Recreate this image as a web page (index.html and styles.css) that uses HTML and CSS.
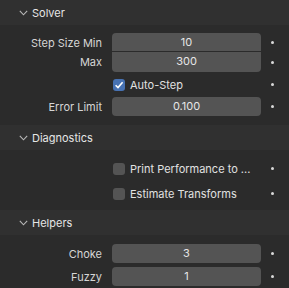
FILE: index.html
```html
<!DOCTYPE html>
<html lang="en">
<head>
    <meta charset="UTF-8">
    <title>Solver Panel</title>
    <link rel="stylesheet" href="styles.css">
</head>
<body>
    <div class="panel">
        <div class="panel-header">
            <svg class="chevron" width="9" height="6" viewBox="0 0 9 6"><path d="M0.8 0.8 L4.5 4.8 L8.2 0.8" /></svg>
            <span>Solver</span>
        </div>
        <div class="panel-body solver">
            <div class="aligned">
                <div class="row">
                    <label>Step Size Min</label>
                    <div class="field top">10</div>
                    <span class="dot"></span>
                </div>
                <div class="row">
                    <label>Max</label>
                    <div class="field bottom">300</div>
                    <span class="dot"></span>
                </div>
            </div>
            <div class="row check-row">
                <label></label>
                <div class="check"><span class="box checked"><svg width="10" height="10" viewBox="0 0 10 10"><path d="M1.6 5.2 L4 7.6 L8.6 2.2" /></svg></span>Auto-Step</div>
                <span class="dot"></span>
            </div>
            <div class="row">
                <label>Error Limit</label>
                <div class="field">0.100</div>
                <span class="dot"></span>
            </div>
        </div>

        <div class="panel-header">
            <svg class="chevron" width="9" height="6" viewBox="0 0 9 6"><path d="M0.8 0.8 L4.5 4.8 L8.2 0.8" /></svg>
            <span>Diagnostics</span>
        </div>
        <div class="panel-body diagnostics">
            <div class="row check-row">
                <label></label>
                <div class="check"><span class="box"></span>Print Performance to ...</div>
                <span class="dot"></span>
            </div>
            <div class="row check-row">
                <label></label>
                <div class="check"><span class="box"></span>Estimate Transforms</div>
                <span class="dot"></span>
            </div>
        </div>

        <div class="panel-header">
            <svg class="chevron" width="9" height="6" viewBox="0 0 9 6"><path d="M0.8 0.8 L4.5 4.8 L8.2 0.8" /></svg>
            <span>Helpers</span>
        </div>
        <div class="panel-body helpers">
            <div class="row">
                <label>Choke</label>
                <div class="field">3</div>
                <span class="dot"></span>
            </div>
            <div class="row">
                <label>Fuzzy</label>
                <div class="field">1</div>
                <span class="dot"></span>
            </div>
        </div>
    </div>
</body>
</html>
```

FILE: styles.css
```css
body {
    margin: 0;
    padding: 0;
    background-color: #2b2b2b;
    font-family: Inter, "DejaVu Sans", sans-serif;
    font-size: 11px;
    color: #e1e1e1;
}

.panel {
    width: 289px;
    height: 288px;
    overflow: hidden;
}

.panel-header {
    height: 25px;
    display: flex;
    align-items: center;
    padding-left: 19px;
    background-color: #303030;
    color: #e6e6e6;
    font-size: 11px;
}

.chevron {
    margin-right: 4px;
}

.chevron path {
    fill: none;
    stroke: #b8b8b8;
    stroke-width: 1.1;
}

.panel-body {
    background-color: #2b2b2b;
}

.solver {
    padding-top: 8px;
    height: 92px;
}

.diagnostics {
    padding-top: 6px;
    height: 54px;
}

.helpers {
    padding-top: 9px;
}

.row {
    display: grid;
    grid-template-columns: 112px 149px 22px;
    align-items: center;
    height: 19px;
}

.row label {
    text-align: right;
    padding-right: 10px;
    color: #d6d6d6;
    white-space: nowrap;
}

.row .dot {
    width: 3px;
    height: 3px;
    border-radius: 50%;
    background-color: #d8d8d8;
    justify-self: center;
}

.field {
    height: 19px;
    line-height: 19px;
    background-color: #545454;
    border-radius: 4px;
    text-align: center;
    color: #e6e6e6;
}

.field.top {
    border-radius: 4px 4px 0 0;
    border-bottom: 1px solid #2b2b2b;
    height: 18px;
    line-height: 19px;
}

.field.bottom {
    border-radius: 0 0 4px 4px;
    height: 20px;
}

.aligned .row:last-child {
    height: 20px;
}

.check-row {
    height: 25px;
}

.helpers .row + .row {
    margin-top: 4px;
}

.check {
    display: flex;
    align-items: center;
    white-space: nowrap;
    color: #e1e1e1;
    padding-left: 1px;
}

.box {
    width: 12px;
    height: 12px;
    border-radius: 3px;
    background-color: #545454;
    margin-right: 5px;
    display: flex;
    align-items: center;
    justify-content: center;
}

.box.checked {
    background-color: #4772b3;
}

.box svg path {
    fill: none;
    stroke: #ffffff;
    stroke-width: 1.6;
}
```
